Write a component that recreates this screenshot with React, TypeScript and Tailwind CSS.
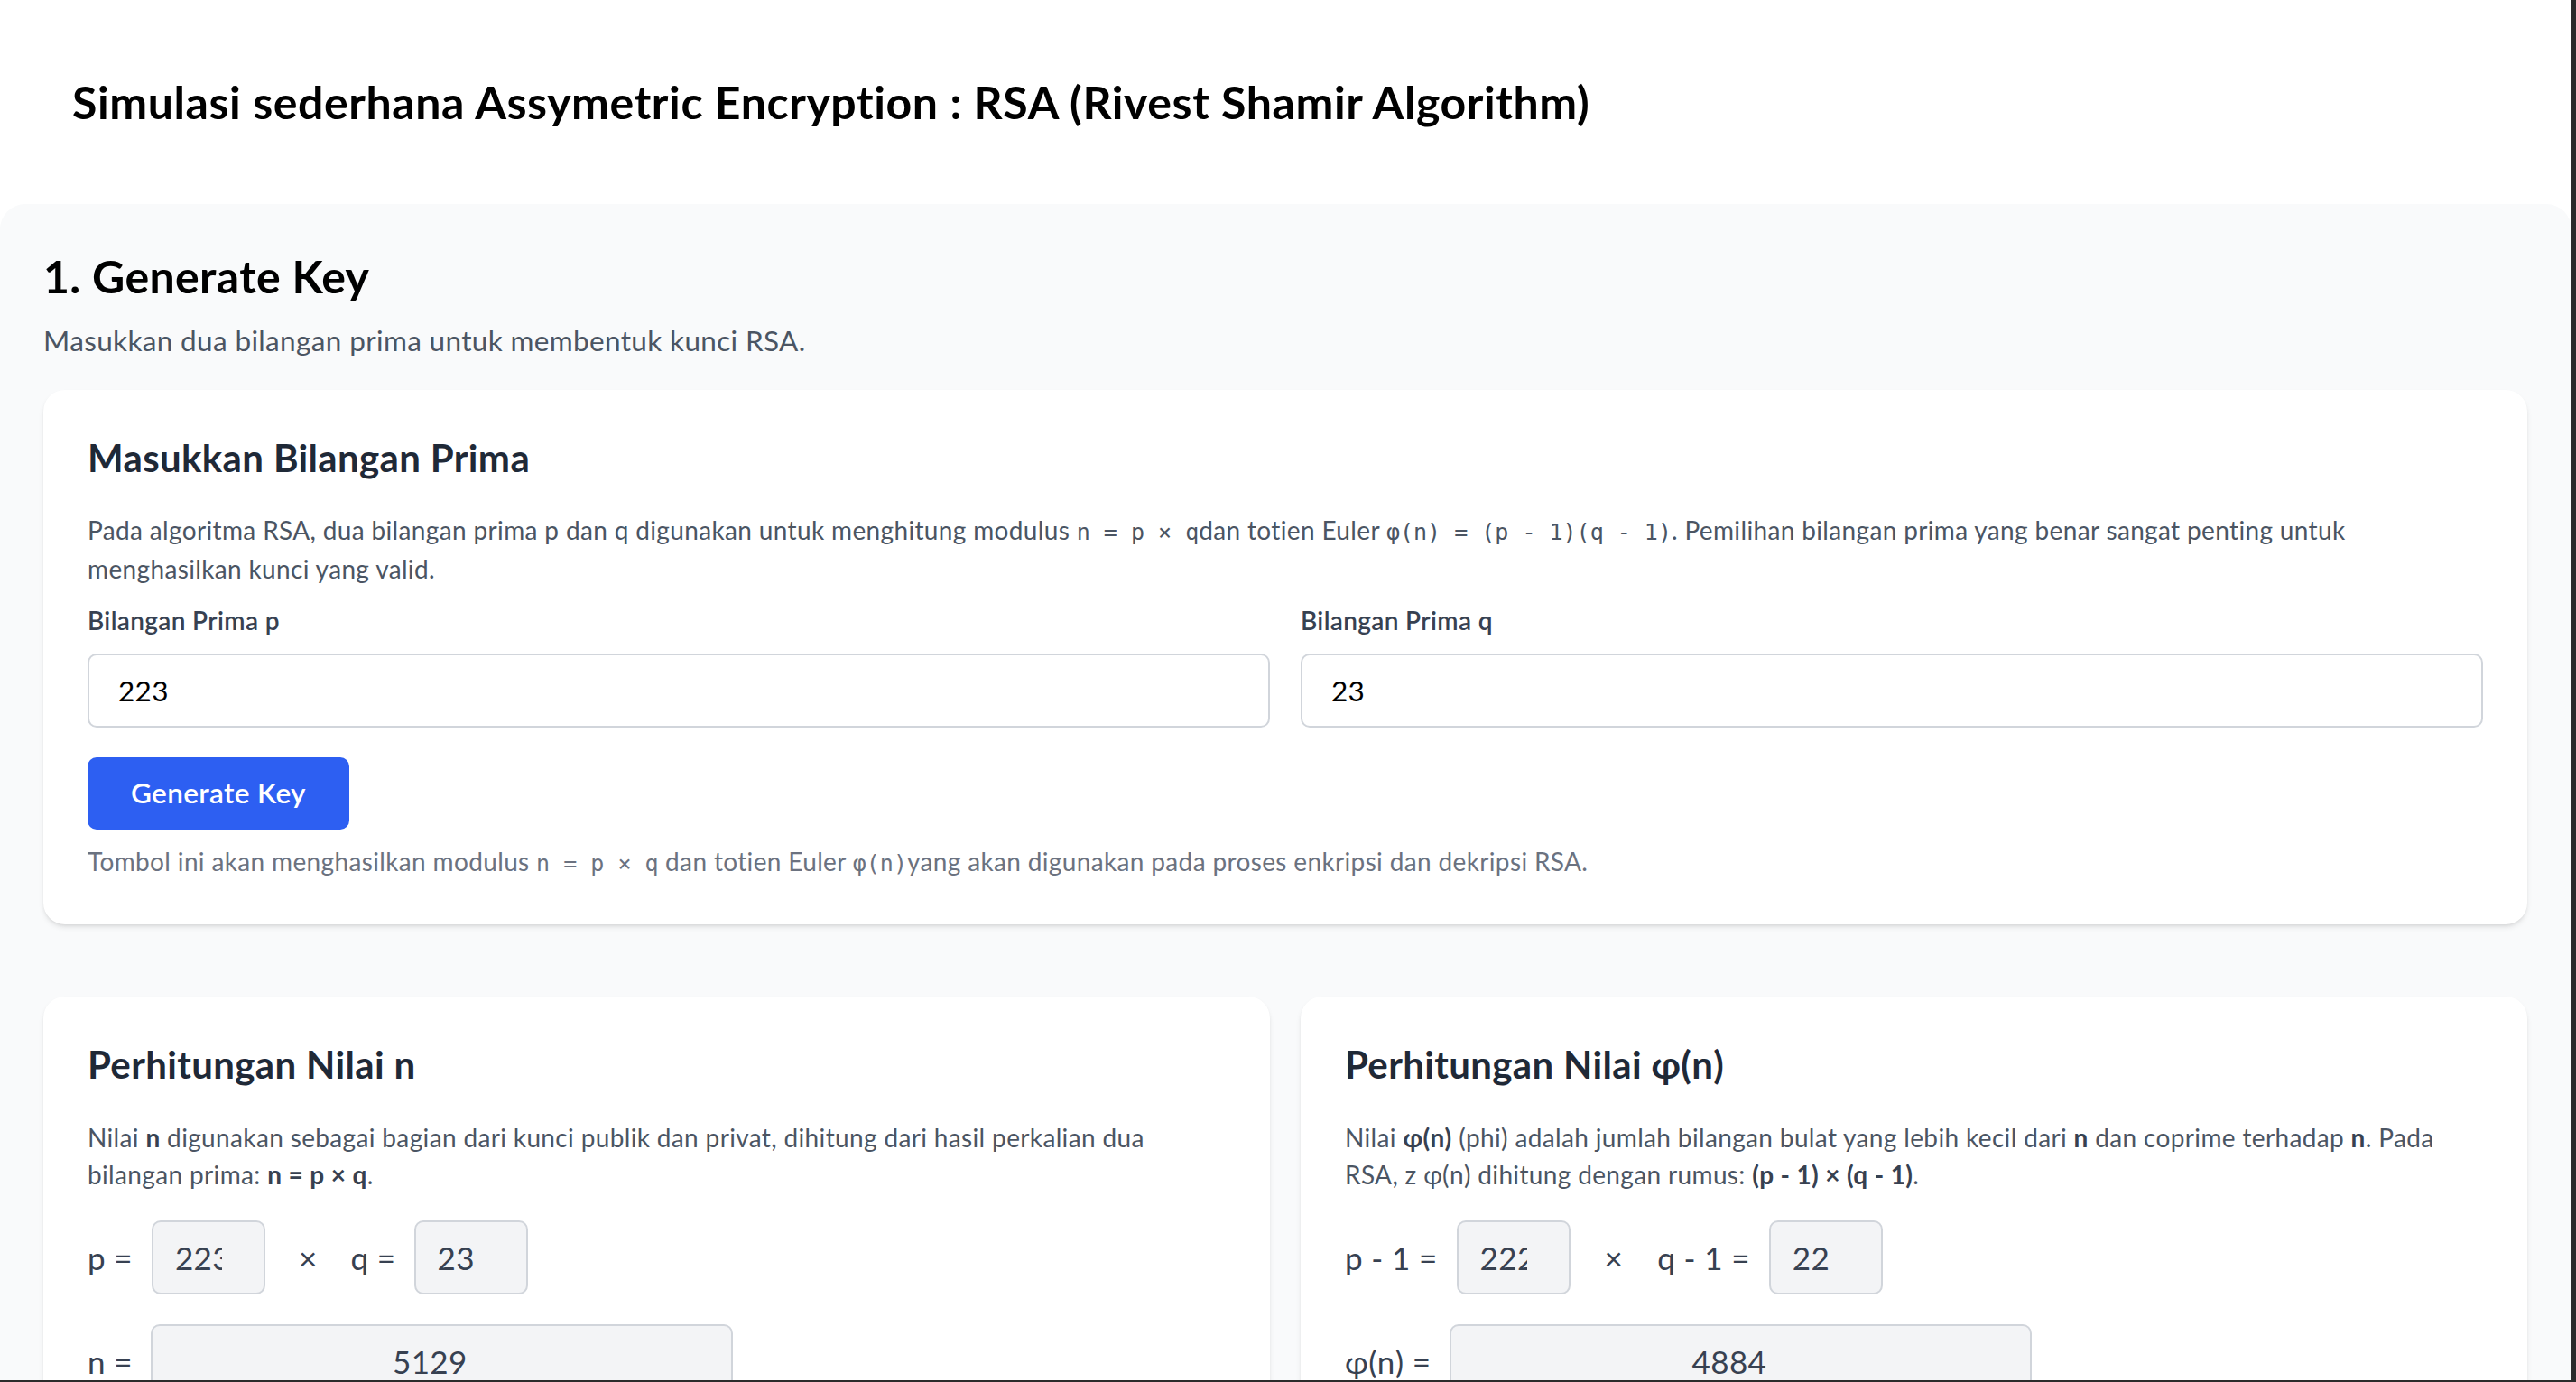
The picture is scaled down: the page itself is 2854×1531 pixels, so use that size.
import React from 'react';

const sans = "font-['Lato','Open_Sans',sans-serif] tracking-[0.022em]";
const mono = "font-['DejaVu_Sans_Mono','Liberation_Mono',monospace] text-[25px] tracking-normal";

// kotak nilai kecil (mirip input number yang terpotong)
const SmallBox: React.FC<{ value: string }> = ({ value }) => (
  <div className="w-[126px] h-[82px] shrink-0 rounded-[10px] border-2 border-[#d1d5db] bg-[#f3f4f6] flex items-center pl-[24px]">
    <span className="block w-[52px] overflow-hidden whitespace-nowrap text-[35px] leading-[44px] text-[#374151]">{value}</span>
  </div>
);

const WideBox: React.FC<{ value: string }> = ({ value }) => (
  <div className="w-[645px] h-[82px] shrink-0 rounded-[10px] border-2 border-[#d1d5db] bg-[#f3f4f6] flex items-center justify-center pr-[26px]">
    <span className="text-[35px] leading-[44px] text-[#374151]">{value}</span>
  </div>
);

const Card: React.FC<{ children: React.ReactNode; className?: string }> = ({ children, className = '' }) => (
  <div className={`bg-white rounded-[24px] shadow-md px-[49px] pt-[49px] ${className}`}>{children}</div>
);

const App: React.FC = () => {
  return (
    <div className={`h-screen w-full overflow-hidden bg-white border-r-[5px] border-b-2 border-[#2b2b2b] ${sans}`}>
      {/* Header */}
      <header className="h-[226px] flex items-center px-[80px]">
        <h1 className="text-[50px] leading-[60px] font-bold text-black tracking-[0.6px]">
          Simulasi sederhana Assymetric Encryption : RSA (Rivest Shamir Algorithm)
        </h1>
      </header>

      <main className="bg-[#f9fafb] rounded-t-[28px] pl-[48px] pr-[49px] pt-[50px] pb-[60px]">
        <h2 className="text-[50px] leading-[60px] font-bold text-black">1. Generate Key</h2>
        <p className="mt-[19px] text-[31.5px] leading-[44px] text-[#4b5563]">
          Masukkan dua bilangan prima untuk membentuk kunci RSA.
        </p>

        {/* Input bilangan prima */}
        <Card className="mt-[33px] pb-[46px]">
          <h3 className="text-[42px] leading-[52px] font-bold text-[#1f2937]">Masukkan Bilangan Prima</h3>
          <p className="mt-[34px] text-[28px] leading-[41px] text-[#4b5563]">
            Pada algoritma RSA, dua bilangan prima p dan q digunakan untuk menghitung modulus{' '}
            <code className={mono}>n = p × q</code>dan totien Euler{' '}
            <code className={mono}>φ(n) = (p - 1)(q - 1)</code>. Pemilihan bilangan prima yang benar sangat penting
            untuk menghasilkan kunci yang valid.
          </p>

          <div className="grid grid-cols-2 gap-[34px] mt-[15px]">
            <div>
              <label className="block text-[28px] leading-[42px] font-semibold text-[#374151]">Bilangan Prima p</label>
              <div className="mt-[16px] h-[82px] rounded-[10px] border-2 border-[#d1d5db] bg-white flex items-center px-[32px] text-[31.5px] leading-[44px] text-black">
                223
              </div>
            </div>
            <div>
              <label className="block text-[28px] leading-[42px] font-semibold text-[#374151]">Bilangan Prima q</label>
              <div className="mt-[16px] h-[82px] rounded-[10px] border-2 border-[#d1d5db] bg-white flex items-center px-[32px] text-[31.5px] leading-[44px] text-black">
                23
              </div>
            </div>
          </div>

          <button className="mt-[33px] h-[80px] px-[48px] rounded-[10px] bg-[#2d5ff2] text-white text-[31.5px] font-semibold">
            Generate Key
          </button>

          <p className="mt-[14px] text-[28px] leading-[42px] text-[#6b7280]">
            Tombol ini akan menghasilkan modulus <code className={mono}>n = p × q</code> dan totien Euler{' '}
            <code className={mono}>φ(n)</code>yang akan digunakan pada proses enkripsi dan dekripsi RSA.
          </p>
        </Card>

        {/* Perhitungan n dan phi */}
        <div className="grid grid-cols-2 gap-[34px] mt-[80px]">
          <Card className="pb-[49px]">
            <h3 className="text-[42px] leading-[52px] font-bold text-[#1f2937]">Perhitungan Nilai n</h3>
            <p className="mt-[35px] text-[28px] leading-[41px] text-[#4b5563]">
              Nilai <b className="text-[#374151]">n</b> digunakan sebagai bagian dari kunci publik dan privat, dihitung dari
              hasil perkalian dua bilangan prima: <b className="text-[#374151]">n = p × q</b>.
            </p>
            <div className="mt-[30px] flex items-center text-[35px] leading-[44px] text-[#374151]">
              <span className="mr-[21px]">p =</span>
              <SmallBox value="223" />
              <span className="mx-[37px]">×</span>
              <span className="mr-[20px]">q =</span>
              <SmallBox value="23" />
            </div>
            <div className="mt-[33px] flex items-center text-[35px] leading-[44px] text-[#374151]">
              <span className="mr-[20px]">n =</span>
              <WideBox value="5129" />
            </div>
          </Card>

          <Card className="pb-[49px]">
            <h3 className="text-[42px] leading-[52px] font-bold text-[#1f2937]">Perhitungan Nilai φ(n)</h3>
            <p className="mt-[35px] text-[28px] leading-[41px] text-[#4b5563]">
              Nilai <b className="text-[#374151]">φ(n)</b> (phi) adalah jumlah bilangan bulat yang lebih kecil dari{' '}
              <b className="text-[#374151]">n</b> dan coprime terhadap <b className="text-[#374151]">n</b>. Pada RSA, z φ(n)
              dihitung dengan rumus: <b className="text-[#374151]">(p - 1) × (q - 1)</b>.
            </p>
            <div className="mt-[30px] flex items-center text-[35px] leading-[44px] text-[#374151]">
              <span className="mr-[21px]">p - 1 =</span>
              <SmallBox value="222" />
              <span className="mx-[38px]">×</span>
              <span className="mr-[21px]">q - 1 =</span>
              <SmallBox value="22" />
            </div>
            <div className="mt-[33px] flex items-center text-[35px] leading-[44px] text-[#374151]">
              <span className="mr-[21px]">φ(n) =</span>
              <WideBox value="4884" />
            </div>
          </Card>
        </div>
      </main>
    </div>
  );
};

export default App;
